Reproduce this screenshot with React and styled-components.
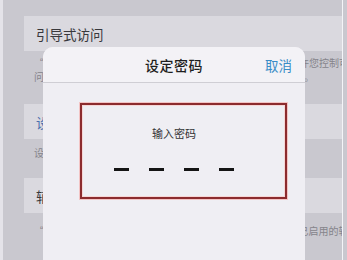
import React from "react";
import styled, { createGlobalStyle } from "styled-components";

const GlobalStyle = createGlobalStyle`
  html, body {
    margin: 0;
    padding: 0;
    background: #c9c8cf;
  }
  body {
    font-family: "Noto Sans CJK SC", "Noto Sans", sans-serif;
  }
`;

const Screen = styled.div`
  position: relative;
  width: 347px;
  height: 260px;
  overflow: hidden;
  background: #c9c8cf;
  box-sizing: border-box;
  border-left: 3px solid #e4e3e9;
`;

const List = styled.div`
  width: 340px;
  height: 260px;
  box-sizing: border-box;
  border-right: 1px solid #f4f4f7;
  padding-top: 16px;
  display: flex;
  flex-direction: column;
`;

const Section = styled.section`
  margin-top: ${(p) => p.$gap || 0}px;
`;

const Row = styled.div`
  height: 35px;
  margin-left: 21px;
  padding-left: 12px;
  display: flex;
  align-items: center;
  background: #dad9df;
  font-size: 13.5px;
  color: ${(p) => (p.$link ? "#4a6fae" : "#38383c")};
`;

const Footer = styled.div`
  padding: ${(p) => p.$top || 6}px 0 0 31px;
  font-size: 10px;
  line-height: 14px;
  color: #85848b;
  overflow: hidden;
`;

const Line = styled.div`
  white-space: nowrap;
`;

const Modal = styled.div`
  position: absolute;
  left: 40px;
  top: 47px;
  width: 262px;
  height: 240px;
  border-radius: 10px;
  background: #efeef3;
  overflow: hidden;
`;

const ModalHeader = styled.div`
  height: 35px;
  display: grid;
  grid-template-columns: 1fr auto 1fr;
  align-items: center;
  background: #f3f2f6;
  border-bottom: 1px solid #cfced4;
`;

const Title = styled.div`
  grid-column: 2;
  font-size: 14px;
  font-weight: 500;
  color: #1e1e20;
  letter-spacing: 0.5px;
`;

const Cancel = styled.div`
  grid-column: 3;
  justify-self: end;
  padding-right: 13px;
  font-size: 13.5px;
  color: #3a8cc6;
`;

const Body = styled.div`
  padding: 20px 18px 0 37px;
`;

const PassBox = styled.div`
  height: 96px;
  box-sizing: border-box;
  border: 2px solid #8c2b2e;
  box-shadow: 0 0 0 1px #f3c4c4, inset 0 0 0 1px #f6d6d6;
  padding: 21px 19px 0 0;
  display: flex;
  flex-direction: column;
  align-items: center;
`;

const Prompt = styled.div`
  font-size: 11px;
  line-height: 14px;
  color: #333336;
`;

const Dashes = styled.div`
  margin-top: 28px;
  display: flex;
  gap: 20px;
`;

const Dash = styled.div`
  width: 15px;
  height: 3px;
  background: #141414;
`;

export default function App() {
  return (
    <>
      <GlobalStyle />
      <Screen lang="zh-CN">
        <List>
          <Section>
            <Row>引导式访问</Row>
            <Footer $top={5}>
              <Line>“引导式访问”会让 iPad 一直停留在当前单个应用中，并允许您控制可访</Line>
              <Line>问的功能，并可设置密码以防止他人在未经您授权时随意退出。</Line>
            </Footer>
          </Section>
          <Section $gap={20}>
            <Row $link>设定引导式访问密码</Row>
            <Footer $top={7}>
              <Line>设定在“引导式访问”会话中使用的密码。</Line>
            </Footer>
          </Section>
          <Section $gap={18}>
            <Row>辅助功能快捷键</Row>
            <Footer $top={11}>
              <Line>“辅助功能快捷键”可让您在 “引导式访问” 中快速地调整已启用的辅助功能。</Line>
            </Footer>
          </Section>
        </List>
        <Modal>
          <ModalHeader>
            <Title>设定密码</Title>
            <Cancel>取消</Cancel>
          </ModalHeader>
          <Body>
            <PassBox>
              <Prompt>输入密码</Prompt>
              <Dashes>
                <Dash />
                <Dash />
                <Dash />
                <Dash />
              </Dashes>
            </PassBox>
          </Body>
        </Modal>
      </Screen>
    </>
  );
}
